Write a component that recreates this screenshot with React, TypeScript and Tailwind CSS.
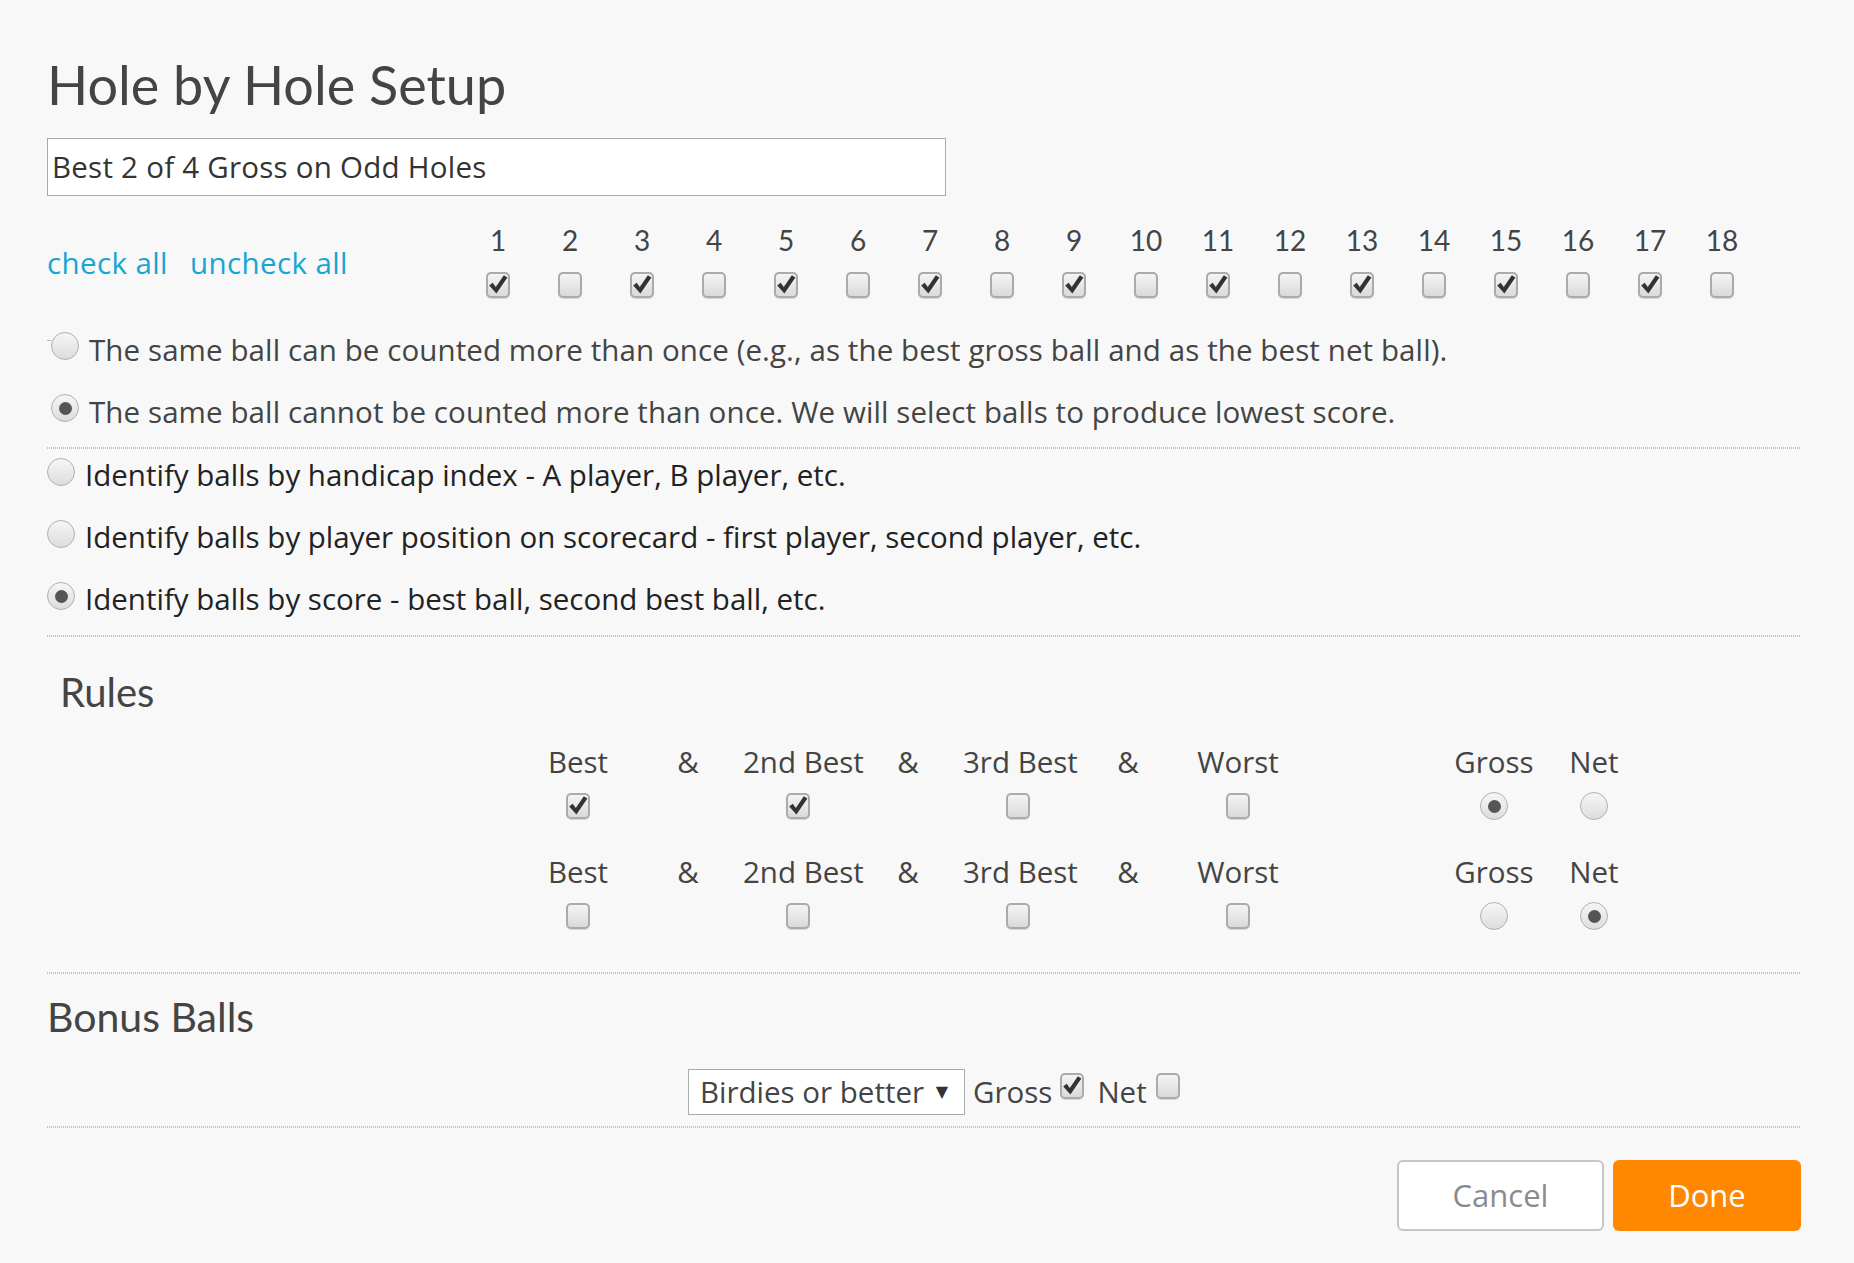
import React from "react";

const holes = Array.from({ length: 18 }, (_, i) => i + 1);

function Checkbox({ checked, className = "" }: { checked?: boolean; className?: string }) {
  return (
    <span
      className={
        "relative inline-block h-[26px] w-[24px] shrink-0 rounded-[5px] border-2 border-[#ababab] bg-linear-to-b from-[#f4f4f4] to-[#dadada] shadow-[0_1px_0_#d6d6d6] " +
        className
      }
    >
      {checked && (
        <svg viewBox="0 0 24 26" className="absolute -inset-[2px] h-[26px] w-[24px]">
          <polygon points="3.2,13.6 6.7,10.8 9.8,15 17.8,3.2 21.4,5.6 10.4,21.4" fill="#333" />
        </svg>
      )}
    </span>
  );
}

function Radio({ checked, className = "" }: { checked?: boolean; className?: string }) {
  return (
    <span
      className={
        "flex h-[28px] w-[28px] shrink-0 items-center justify-center rounded-full border-[1.5px] border-[#b0b0b0] bg-linear-to-b from-[#f6f6f6] to-[#dddddd] " +
        className
      }
    >
      {checked && <span className="h-[13px] w-[13px] rounded-full bg-[#555]" />}
    </span>
  );
}

function Dots({ className = "" }: { className?: string }) {
  return (
    <div
      className={
        "h-[2px] w-full bg-[repeating-linear-gradient(to_right,#c2c2c2_0px,#c2c2c2_1px,transparent_1px,transparent_2px)] " +
        className
      }
    />
  );
}

const ruleCols = ["Best", "&", "2nd Best", "&", "3rd Best", "&", "Worst"];

function RuleBlock({ checks, gross }: { checks: boolean[]; gross: boolean }) {
  return (
    <div>
      <div className="ml-[476px] flex h-[30px] font-['Open_Sans',sans-serif] text-[29.5px] leading-[30px] text-[#444]">
        {ruleCols.map((c, i) => (
          <div key={i} className="w-[110px] whitespace-nowrap text-center">
            {c}
          </div>
        ))}
        <div className="w-[151px]" />
        <div className="w-[100px] text-center">Gross</div>
        <div className="w-[100px] text-center">Net</div>
      </div>
      <div className="ml-[476px] mt-[16px] flex h-[26px] items-center">
        {ruleCols.map((c, i) => (
          <div key={i} className="flex w-[110px] justify-center">
            {c !== "&" && <Checkbox checked={checks[i / 2]} />}
          </div>
        ))}
        <div className="w-[151px]" />
        <div className="flex w-[100px] justify-center">
          <Radio checked={gross} />
        </div>
        <div className="flex w-[100px] justify-center">
          <Radio checked={!gross} />
        </div>
      </div>
    </div>
  );
}

export default function App() {
  return (
    <div className="min-h-screen w-full bg-[#f8f8f8] font-[Lato,sans-serif] text-[#444]">
      <div className="pb-[30px] pl-[47px] pr-[53px]">
        <h1 className="pt-[58px] text-[54px] font-normal leading-none text-[#444]">Hole by Hole Setup</h1>

        <div className="mt-[26px] flex h-[58px] w-[899px] items-center border border-[#aaa] bg-white pl-[4px] font-['Open_Sans',sans-serif] text-[29.5px] tracking-[0.25px] text-[#333]">
          Best 2 of 4 Gross on Odd Holes
        </div>

        <div className="flex h-[123px]">
          <div className="mt-[52px] flex w-[415px] gap-[22px] self-start font-['Open_Sans',sans-serif] text-[29.5px] leading-[30px] tracking-[0.4px] text-[#17a5d4]">
            <span>check all</span>
            <span>uncheck all</span>
          </div>
          <div className="flex pt-[29px]">
            {holes.map((h) => (
              <div key={h} className="flex w-[72px] flex-col items-center">
                <span className="h-[30px] text-[28px] leading-[30px] text-[#444]">{h}</span>
                <Checkbox checked={h % 2 === 1} className="mt-[17px]" />
              </div>
            ))}
          </div>
        </div>

        <div className="font-['Open_Sans',sans-serif] text-[29.5px] leading-[30px]">
          <div className="flex h-[62px] items-center tracking-[0.1px] text-[#444]">
            <span className="mb-[20px] h-[1px] w-[4px] bg-[#b5b5b5]" />
            <Radio className="mb-[8px]" />
            <span className="ml-[10px] whitespace-nowrap">
              The same ball can be counted more than once (e.g., as the best gross ball and as the best net ball).
            </span>
          </div>
          <div className="flex h-[62px] items-center tracking-[0.1px] text-[#444]">
            <Radio checked className="mb-[8px] ml-[4px]" />
            <span className="ml-[10px] whitespace-nowrap">
              The same ball cannot be counted more than once. We will select balls to produce lowest score.
            </span>
          </div>

          <Dots className="mt-[4px]" />

          <div className="flex h-[57px] items-center pb-[5px] text-[#222]">
            <Radio className="mb-[6px]" />
            <span className="ml-[10px] whitespace-nowrap">Identify balls by handicap index - A player, B player, etc.</span>
          </div>
          <div className="flex h-[62px] items-center text-[#222]">
            <Radio className="mb-[6px]" />
            <span className="ml-[10px] whitespace-nowrap">
              Identify balls by player position on scorecard - first player, second player, etc.
            </span>
          </div>
          <div className="flex h-[62px] items-center text-[#222]">
            <Radio checked className="mb-[6px]" />
            <span className="ml-[10px] whitespace-nowrap">Identify balls by score - best ball, second best ball, etc.</span>
          </div>

          <Dots className="mt-[5px]" />
        </div>

        <h2 className="mt-[31px] pl-[13px] text-[40px] font-normal leading-[48px] text-[#444]">Rules</h2>

        <div className="mt-[31px]">
          <RuleBlock checks={[true, true, false, false]} gross={true} />
        </div>
        <div className="mt-[38px]">
          <RuleBlock checks={[false, false, false, false]} gross={false} />
        </div>

        <Dots className="mt-[43px]" />

        <h2 className="mt-[19px] text-[41px] font-normal leading-[48px] text-[#444]">Bonus Balls</h2>

        <div className="ml-[641px] mt-[28px] flex h-[46px] items-center font-['Open_Sans',sans-serif] text-[29.5px] leading-[30px] text-[#444]">
          <div className="flex h-[46px] w-[277px] items-center justify-between border border-[#aaa] bg-white pl-[11px] pr-[16px]">
            <span className="whitespace-nowrap">Birdies or better</span>
            <span className="font-['DejaVu_Sans',sans-serif] text-[16px] text-[#333]">▼</span>
          </div>
          <span className="ml-[8px]">Gross</span>
          <Checkbox checked className="mb-[12px] ml-[8px]" />
          <span className="ml-[13px]">Net</span>
          <Checkbox className="mb-[12px] ml-[9px]" />
        </div>

        <Dots className="mt-[11px]" />

        <div className="mt-[32px] flex justify-end gap-[9px] font-['Open_Sans',sans-serif]">
          <button className="flex h-[71px] w-[207px] items-center justify-center rounded-[6px] border-2 border-[#c6c6c6] bg-white text-[31px] text-[#888c90]">
            Cancel
          </button>
          <button className="flex h-[71px] w-[188px] items-center justify-center rounded-[6px] bg-[#ff8800] text-[31px] text-white">
            Done
          </button>
        </div>
      </div>
    </div>
  );
}
